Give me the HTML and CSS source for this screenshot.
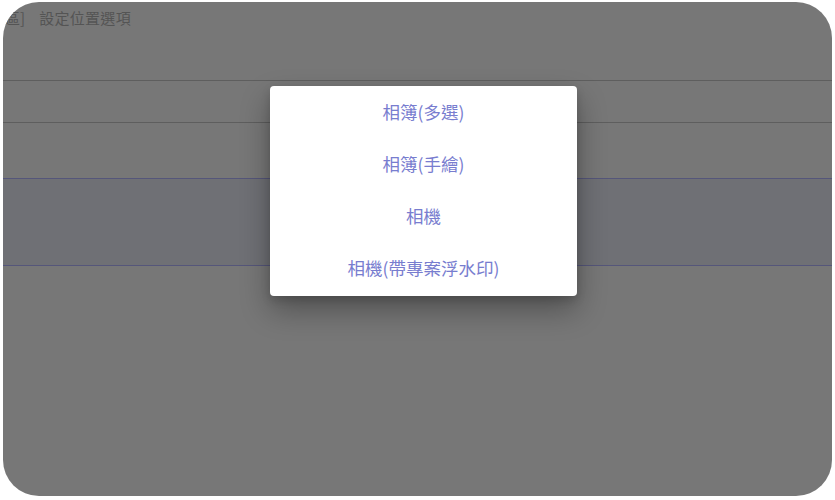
FILE: index.html
```html
<!DOCTYPE html>
<html lang="zh-Hant">
<head>
<meta charset="utf-8">
<title>設定位置選項</title>
<link rel="stylesheet" href="styles.css">
</head>
<body>
<div class="frame">
  <div class="header">
    <span class="title-prefix">[區]</span>
    <span class="title">設定位置選項</span>
  </div>
  <div class="row row-a"></div>
  <div class="row row-b"></div>
  <div class="row row-sel"></div>
  <div class="rest"></div>

  <div class="menu">
    <div class="menu-item">相簿(多選)</div>
    <div class="menu-item">相簿(手繪)</div>
    <div class="menu-item">相機</div>
    <div class="menu-item">相機(帶專案浮水印)</div>
  </div>
</div>
</body>
</html>
```

FILE: styles.css
```css
html, body {
  margin: 0;
  padding: 0;
  background: #ffffff;
}

body {
  width: 835px;
  height: 500px;
  overflow: hidden;
  font-family: "Noto Sans CJK TC", "Noto Sans", sans-serif;
}

.frame {
  position: relative;
  margin: 2px 3px 0 3px;
  width: 829px;
  height: 494px;
  border-radius: 36px;
  background: #777777;
  overflow: hidden;
  display: flex;
  flex-direction: column;
}

.header {
  height: 79px;
  box-sizing: border-box;
  padding-top: 6px;
  display: flex;
  align-items: flex-start;
  gap: 14px;
  margin-left: -3px;
  font-size: 15px;
  line-height: 20px;
  color: #545454;
  border-bottom: 1px solid #5e5e5e;
}

.title {
  letter-spacing: 0.3px;
}

.row {
  box-sizing: border-box;
}

.row-a {
  height: 42px;
  border-bottom: 1px solid #5e5e5e;
}

.row-b {
  height: 55px;
}

.row-sel {
  height: 88px;
  background: #6f7075;
  border-top: 1px solid #55567a;
  border-bottom: 1px solid #55567a;
}

.rest {
  flex: 1;
}

.menu {
  position: absolute;
  left: 267px;
  top: 84px;
  width: 307px;
  height: 210px;
  padding-bottom: 3px;
  box-sizing: border-box;
  background: #ffffff;
  border-radius: 4px;
  box-shadow: 0 14px 30px rgba(0, 0, 0, 0.32), 0 4px 10px rgba(0, 0, 0, 0.14);
  display: flex;
  flex-direction: column;
}

.menu-item {
  flex: 1;
  display: flex;
  align-items: center;
  justify-content: center;
  font-size: 17.5px;
  color: #787dcf;
}
```
